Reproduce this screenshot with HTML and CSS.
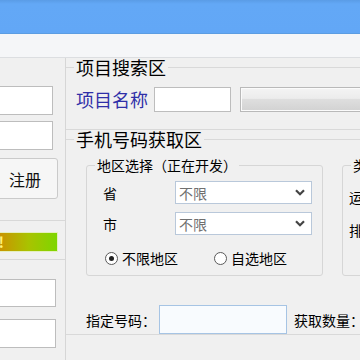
FILE: index.html
```html
<!DOCTYPE html>
<html lang="zh-CN">
<head>
<meta charset="utf-8">
<title>手机号码获取</title>
<link rel="stylesheet" href="styles.css">
</head>
<body>
<div class="window">
  <div class="titlebar"></div>
  <div class="toolbar"></div>
  <div class="main">
    <aside class="left">
      <div class="lsec lsec1">
        <div class="tbox tbox-a"></div>
        <div class="tbox tbox-b"></div>
        <button class="btn">注册</button>
      </div>
      <div class="lsec lsec2">
        <div class="bar"><span>!</span></div>
      </div>
      <div class="lsec lsec3">
        <div class="tbox tbox-c"></div>
        <div class="tbox tbox-d"></div>
      </div>
    </aside>
    <section class="right">
      <fieldset class="group g1">
        <legend>项目搜索区</legend>
        <div class="g1-body">
          <span class="name-label">项目名称</span>
          <div class="tbox name-input"></div>
          <div class="progress"></div>
        </div>
      </fieldset>
      <fieldset class="group g2">
        <legend>手机号码获取区</legend>
        <div class="g2-body">
          <div class="subs">
            <fieldset class="sub area">
              <legend>地区选择（正在开发）</legend>
              <div class="area-body">
                <div class="frow">
                  <span class="flabel">省</span>
                  <div class="select"><span>不限</span><svg class="chev" width="10" height="7" viewBox="0 0 10 7"><path d="M1 1.2 L5 5.2 L9 1.2" fill="none" stroke="#444" stroke-width="2.2"/></svg></div>
                </div>
                <div class="frow">
                  <span class="flabel">市</span>
                  <div class="select"><span>不限</span><svg class="chev" width="10" height="7" viewBox="0 0 10 7"><path d="M1 1.2 L5 5.2 L9 1.2" fill="none" stroke="#444" stroke-width="2.2"/></svg></div>
                </div>
                <div class="radios">
                  <label class="radio"><span class="dot on"></span>不限地区</label>
                  <label class="radio"><span class="dot"></span>自选地区</label>
                </div>
              </div>
            </fieldset>
            <fieldset class="sub type">
              <legend>类</legend>
              <div class="type-body">
                <div class="trow">运</div>
                <div class="trow">排</div>
              </div>
            </fieldset>
          </div>
          <div class="numrow">
            <span class="nlabel">指定号码：</span>
            <div class="tbox num-input"></div>
            <span class="nlabel2">获取数量：</span>
          </div>
        </div>
      </fieldset>
    </section>
  </div>
</div>
</body>
</html>
```
FILE: styles.css
```css
html, body {
  margin: 0;
  background: #f0f0f0;
  overflow: hidden;
}
body {
  font-family: "Noto Sans CJK SC", "Noto Sans", sans-serif;
  color: #000;
}
.window {
  width: 560px;
  height: 360px;
}
.titlebar {
  height: 33px;
  background: linear-gradient(#5a9ce6 0, #63a8f6 12%, #62a7f6 100%);
  border-bottom: 1px solid #5c9de2;
}
.toolbar {
  height: 23px;
  background: #f5f6f8;
  border-bottom: 1px solid #dcdee1;
}
.main {
  display: flex;
  height: 302px;
}
.left {
  width: 65px;
  flex: none;
  border-right: 1px solid #d6d6d6;
  overflow: hidden;
  display: flex;
  flex-direction: column;
}
.lsec {
  display: flex;
  flex-direction: column;
  align-items: flex-end;
  flex: none;
}
.lsec1 {
  height: 162px;
  padding-top: 28px;
  box-sizing: border-box;
}
.lsec2 {
  border-top: 1px solid #d8d8d8;
  height: 38px;
}
.lsec3 {
  border-top: 1px solid #d8d8d8;
}
.tbox {
  background: #fff;
  border: 1px solid #bdbdbd;
  box-sizing: border-box;
  flex: none;
}
.tbox-a, .tbox-b {
  width: 90px;
  height: 29px;
  margin-right: 12px;
}
.tbox-b {
  margin-top: 6px;
}
.btn {
  width: 66px;
  height: 41px;
  margin: 8px 7px 0 0;
  padding: 0;
  border: 1px solid #cacaca;
  border-radius: 3px;
  background: #f6f6f6;
  font: 16px/1 "Noto Sans CJK SC", sans-serif;
  color: #111;
  flex: none;
}
.bar {
  width: 160px;
  height: 20px;
  margin: 11px 7px 0 0;
  box-sizing: border-box;
  border: 1px solid #e4efbf;
  background: linear-gradient(to right, #d06a00 0%, #c99400 64%, #a9c300 82%, #7ed600 100%);
  display: flex;
  align-items: center;
  justify-content: flex-end;
  padding-right: 53px;
  flex: none;
}
.bar span {
  font-size: 15px;
  line-height: 18px;
  font-weight: bold;
  color: #fff27a;
  white-space: nowrap;
}
.tbox-c, .tbox-d {
  width: 90px;
  margin-right: 9px;
}
.tbox-c {
  height: 28px;
  margin-top: 19px;
}
.tbox-d {
  height: 29px;
  margin-top: 12px;
}
.right {
  flex: 1;
  min-width: 0;
}
fieldset.group {
  margin: 0;
  padding: 0;
  border: 1px solid #d9d9d9;
  border-left: none;
  border-right: none;
  min-width: 0;
}
fieldset.group > legend {
  margin-left: 8px;
  padding: 0 2px;
  font-size: 18px;
  line-height: 18px;
}
.g1-body {
  display: flex;
  align-items: center;
  height: 25px;
  padding: 11px 0 17px 10px;
}
.name-label {
  width: 78px;
  flex: none;
  font-size: 18px;
  line-height: 25px;
  color: #2f2fa8;
  white-space: nowrap;
}
.name-input {
  width: 77px;
  height: 25px;
}
.progress {
  width: 160px;
  height: 25px;
  flex: none;
  margin-left: 9px;
  box-sizing: border-box;
  border: 1px solid #b9b9b9;
  background: linear-gradient(#f4f4f4 0, #ececec 45%, #dedede 50%, #d2d2d2 100%);
  box-shadow: inset 0 0 0 1px #fbfbfb;
}
.g2-body {
  padding: 9px 0 0 20px;
}
.subs {
  display: flex;
  gap: 19px;
}
fieldset.sub {
  margin: 0;
  padding: 0;
  border: 1px solid #d6d6d6;
  border-radius: 3px;
  min-width: 0;
}
fieldset.sub > legend {
  margin-left: 8px;
  padding: 0 2px;
  font-size: 14px;
  line-height: 17px;
  white-space: nowrap;
}
.area {
  width: 237px;
  box-sizing: border-box;
  flex: none;
}
.area-body {
  padding: 7px 0 8px 16px;
}
.frow {
  display: flex;
  align-items: center;
  height: 23px;
}
.frow + .frow {
  margin-top: 8px;
}
.flabel {
  width: 72px;
  flex: none;
  font-size: 14px;
}
.select {
  width: 137px;
  height: 23px;
  box-sizing: border-box;
  border: 1px solid #b9c8da;
  background: #fff;
  display: flex;
  align-items: center;
  justify-content: space-between;
  padding: 0 6px 0 3px;
  font-size: 14px;
  color: #707070;
}
.chev {
  display: block;
}
.radios {
  display: flex;
  align-items: center;
  height: 18px;
  margin-top: 14px;
  padding-left: 2px;
  font-size: 14px;
}
.radio {
  display: flex;
  align-items: center;
  gap: 4px;
  white-space: nowrap;
}
.radio + .radio {
  margin-left: 36px;
}
.dot {
  width: 13px;
  height: 13px;
  box-sizing: border-box;
  border: 1px solid #5a5a5a;
  border-radius: 50%;
  background: #fff;
  display: flex;
  align-items: center;
  justify-content: center;
}
.dot.on::after {
  content: "";
  width: 5px;
  height: 5px;
  border-radius: 50%;
  background: #222;
}
.type {
  width: 200px;
  flex: none;
}
.type-body {
  padding: 12px 0 0 6px;
  font-size: 14px;
}
.trow {
  line-height: 23px;
  white-space: nowrap;
}
.trow + .trow {
  margin-top: 10px;
}
.numrow {
  display: flex;
  align-items: center;
  height: 29px;
  margin-top: 29px;
  font-size: 14px;
  white-space: nowrap;
}
.nlabel {
  width: 73px;
  flex: none;
}
.num-input {
  width: 128px;
  height: 29px;
  border-color: #a6c4e4;
  background: #f8fbfe;
}
.nlabel2 {
  margin-left: 7px;
}
```
